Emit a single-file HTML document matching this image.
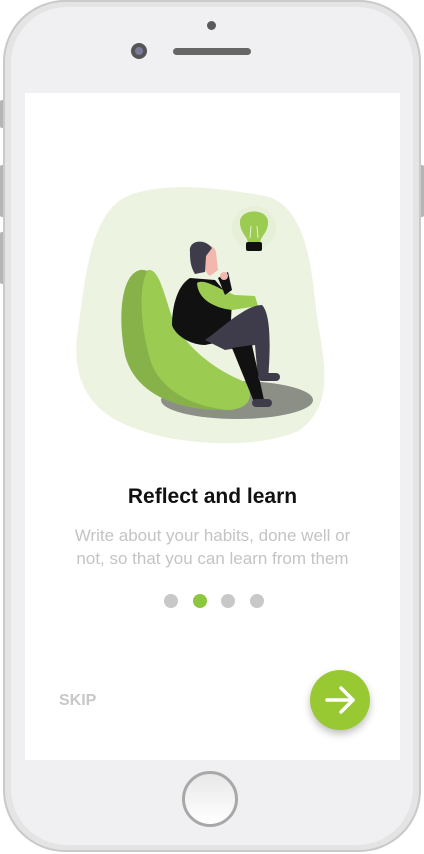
<!DOCTYPE html>
<html><head><style>
body{margin:0;width:424px;height:854px;background:#fff;position:relative;overflow:hidden;font-family:"Liberation Sans",sans-serif}
.phone{position:absolute;left:3px;top:0;width:418px;height:852px;border-radius:62px;background:#e4e4e4;box-shadow:inset 0 0 0 2px #cacaca}
.inner{position:absolute;left:8px;top:7px;right:8px;bottom:7px;border-radius:56px;background:#f0f0f2}
.screen{position:absolute;left:25px;top:93px;width:375px;height:667px;background:#fff}
.btn{position:absolute;width:4px;background:#b5b5b5;border-radius:2px}
</style></head><body>
<div class="btn" style="left:0;top:100px;height:28px"></div>
<div class="btn" style="left:0;top:165px;height:52px"></div>
<div class="btn" style="left:0;top:232px;height:52px"></div>
<div class="btn" style="right:0;top:165px;height:52px"></div>
<div class="phone"><div class="inner"></div></div>
<div style="position:absolute;left:207px;top:21px;width:9px;height:9px;border-radius:50%;background:#5a5a5a"></div>
<div style="position:absolute;left:131px;top:43px;width:16px;height:16px;border-radius:50%;background:#555;"><div style="margin:4px;width:8px;height:8px;border-radius:50%;background:#7a7a9a"></div></div>
<div style="position:absolute;left:173px;top:48px;width:78px;height:7px;border-radius:4px;background:#666"></div>
<div class="screen">
<svg width="375" height="380" viewBox="25 93 375 380" style="position:absolute;left:0;top:0">
<path d="M130 195 C170 180 230 190 260 195 C300 200 310 250 315 300 C320 350 340 400 300 430 C260 450 180 445 140 430 C90 415 70 380 78 330 C85 280 90 210 130 195Z" fill="#ecf3e0"/>
<circle cx="254" cy="228" r="22" fill="#e6f0d8"/>
<ellipse cx="237" cy="400" rx="76" ry="19" fill="#8c8f86"/>
<path d="M140 270 C120 275 118 320 125 355 C135 395 180 412 230 410 C252 408 255 395 240 380 C210 370 190 350 175 330 C160 300 160 268 140 270Z" fill="#87b24a"/>
<path d="M148 270 C160 268 165 300 175 325 C190 350 215 370 245 382 C255 395 250 408 230 410 C200 408 165 395 152 365 C140 330 138 285 148 270Z" fill="#9ccb52"/>
<path d="M190 278 L215 280 L232 300 L230 340 L205 345 C190 345 175 335 172 325 C172 305 178 285 190 278Z" fill="#111"/>
<path d="M197 283 C205 278 220 290 235 295 L255 296 L258 306 L232 310 C215 308 198 300 197 283Z" fill="#9ccb52"/>
<path d="M218 278 L228 272 L232 290 L225 295Z" fill="#111"/>
<path d="M205 340 C220 330 245 305 262 305 C272 315 270 355 268 380 L258 380 L255 345 L225 350 Z" fill="#3e3c4a"/>
<path d="M232 348 L252 345 L264 400 L254 402Z" fill="#111"/>
<rect x="258" y="373" width="22" height="8" rx="4" fill="#3e3c4a"/>
<rect x="252" y="399" width="20" height="8" rx="4" fill="#3e3c4a"/>
<path d="M203 252 C204 244 214 244 216 252 L218 270 L210 276 C204 272 202 262 203 252Z" fill="#f2b8b0"/>
<circle cx="224" cy="276" r="4" fill="#f2b8b0"/>
<path d="M190 252 C188 240 205 238 212 248 L206 256 L205 272 L195 274 C190 266 190 258 190 252Z" fill="#3e3c4a"/>
<path d="M240 222 C240 208 268 208 268 222 C268 232 262 235 260 242 L248 242 C246 235 240 232 240 222Z" fill="#9ccb52"/>
<path d="M250 238 L251 226 M258 238 L257 226" stroke="#e6f0d8" stroke-width="1" fill="none"/>
<rect x="246" y="242" width="16" height="9" rx="2" fill="#111"/>
</svg>
<div style="position:absolute;left:0;width:375px;top:392px;text-align:center;font-size:21px;font-weight:bold;color:#111">Reflect and learn</div>
<div style="position:absolute;left:0;width:375px;top:431px;text-align:center;font-size:17px;line-height:23px;color:#c4c4c4">Write about your habits, done well or<br>not, so that you can learn from them</div>
<div style="position:absolute;left:139px;top:501px;width:14px;height:14px;border-radius:50%;background:#c8c8c8"></div>
<div style="position:absolute;left:168px;top:501px;width:14px;height:14px;border-radius:50%;background:#8dc63f"></div>
<div style="position:absolute;left:196px;top:501px;width:14px;height:14px;border-radius:50%;background:#c8c8c8"></div>
<div style="position:absolute;left:225px;top:501px;width:14px;height:14px;border-radius:50%;background:#c8c8c8"></div>
<div style="position:absolute;left:34px;top:599px;font-size:16px;font-weight:bold;color:#c8c8c8">SKIP</div>
<div style="position:absolute;left:285px;top:577px;width:60px;height:60px;border-radius:50%;background:#98c932;box-shadow:0 4px 8px rgba(0,0,0,.25)">
<svg width="60" height="60"><path d="M17 30H43M31 18L43 30L31 42" stroke="#fff" stroke-width="3.5" fill="none" stroke-linecap="round" stroke-linejoin="round"/></svg></div>
</div>
<div style="position:absolute;left:182px;top:771px;width:56px;height:56px;border-radius:50%;background:linear-gradient(#e8e8e8,#fff);border:3px solid #a8a8a8;box-sizing:border-box"></div>
</body></html>
